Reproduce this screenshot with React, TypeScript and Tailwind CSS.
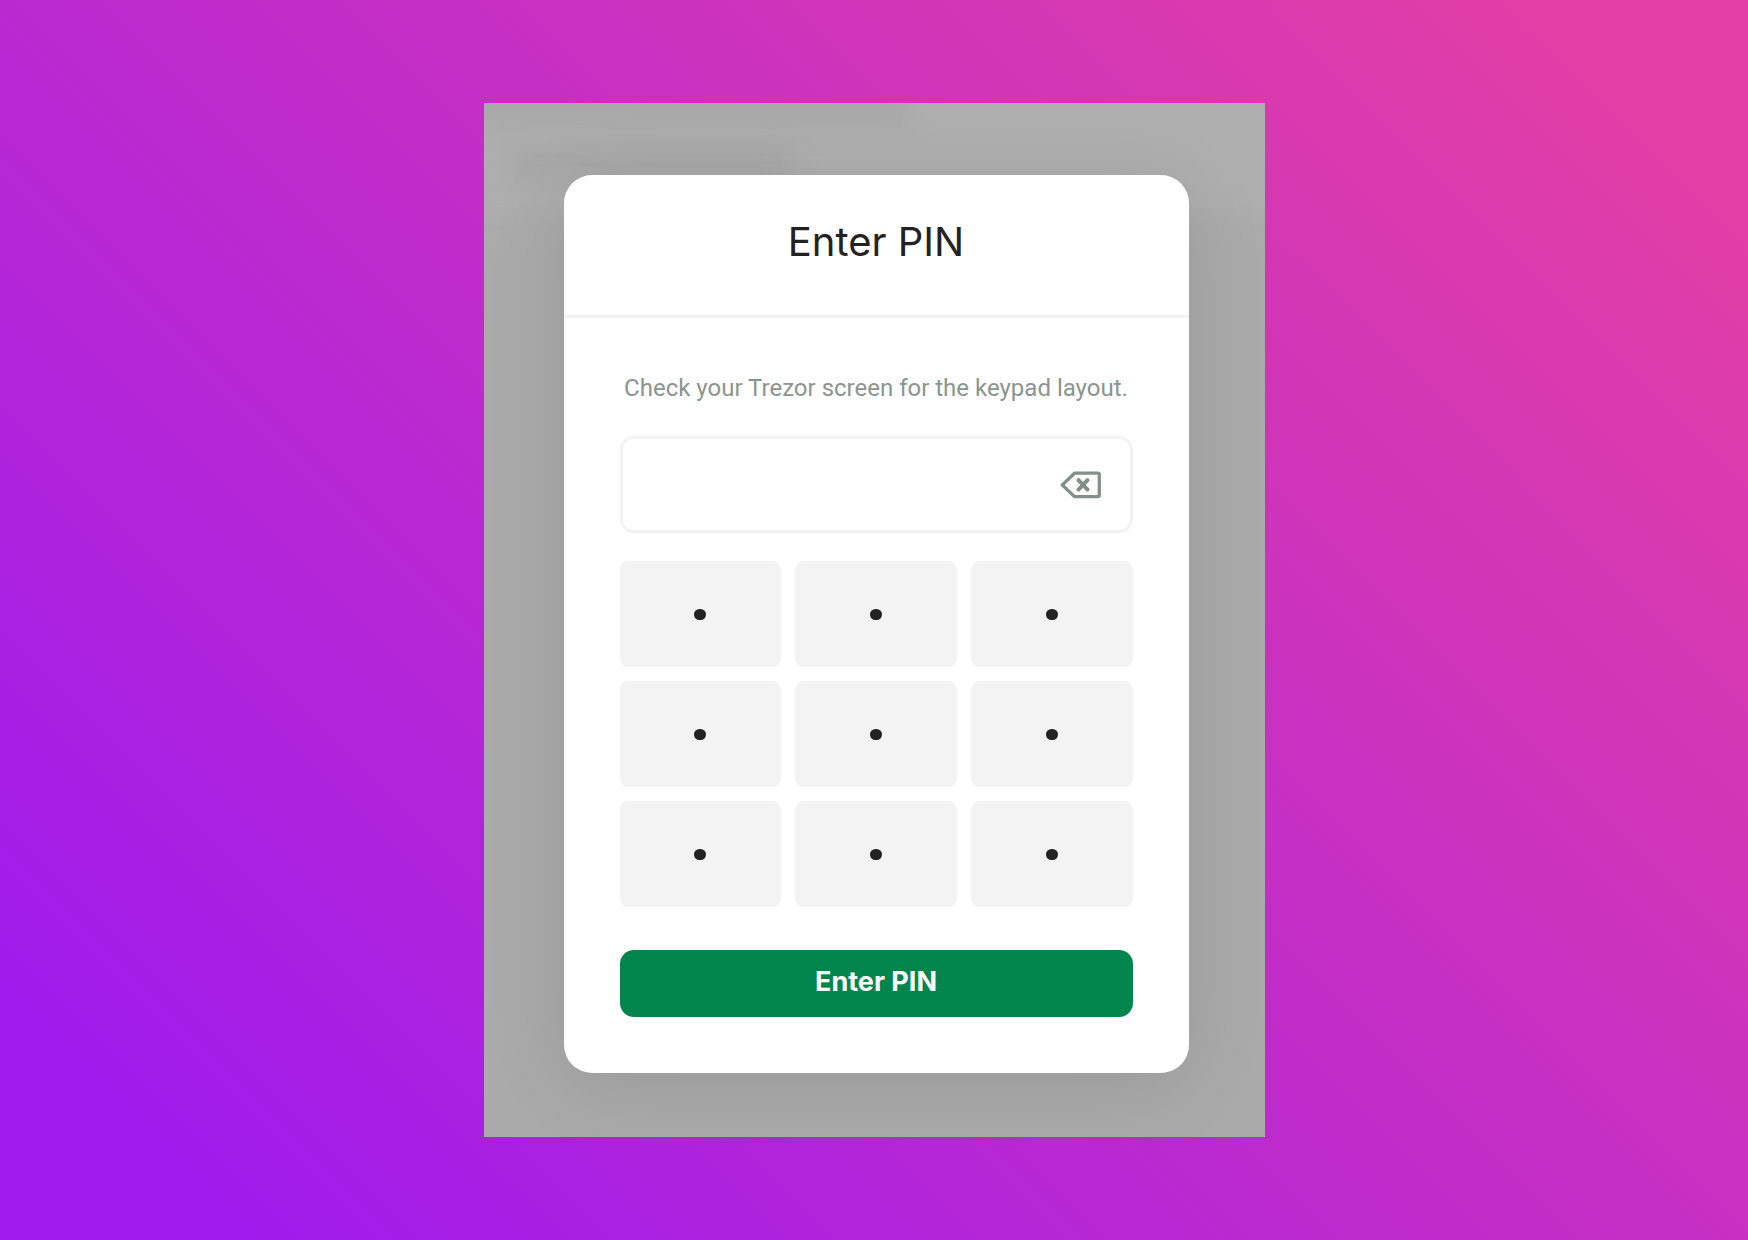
import { useState } from "react"

const keys = [7, 8, 9, 4, 5, 6, 1, 2, 3]

function BackspaceIcon() {
  return (
    <svg width="42" height="30" viewBox="0 0 42 30" fill="none" stroke="#829089" strokeLinejoin="round" aria-hidden="true">
      <path d="M14.5 3.2H37.9a1.4 1.4 0 0 1 1.4 1.4v20.6a1.4 1.4 0 0 1-1.4 1.4H14.5L2.3 15Z" strokeWidth="3.3" />
      <path d="M18.5 10.2l9 9.4M27.5 10.2l-9 9.4" strokeWidth="4" strokeLinecap="round" />
    </svg>
  )
}

type KeypadProps = {
  onPress: (value: number) => void
}

function Keypad({ onPress }: KeypadProps) {
  return (
    <div className="mt-7 grid grid-cols-3 gap-3.5">
      {keys.map((key, i) => (
        <button
          key={key}
          type="button"
          aria-label={`Key ${i + 1}`}
          onClick={() => onPress(key)}
          className="flex h-[106px] items-center justify-center rounded-lg bg-[#f3f3f3] hover:bg-gray-200"
        >
          <span className="h-[11px] w-3 rounded-full bg-[#222222]" />
        </button>
      ))}
    </div>
  )
}

export default function App() {
  const [pin, setPin] = useState("")

  return (
    <main className="flex min-h-screen items-center justify-center bg-[linear-gradient(45deg,#a01bec_8%,#e13ea6_92%)] font-['Inter',sans-serif]">
      <div className="relative w-full max-w-[781px] overflow-hidden bg-[#afafaf] pt-[72px] pr-[76px] pb-16 pl-20">
        {/* blurred page content behind the dialog */}
        <div className="absolute -inset-x-8 top-28 -bottom-8 bg-[#aaaaaa] blur-md" />
        <div className="absolute -top-8 -left-4 h-13 w-[441px] bg-[#a7a7a7] blur-md" />
        <div className="absolute top-11 left-6 h-9 w-[280px] bg-[#a7a7a7] blur-md" />

        <section
          role="dialog"
          aria-labelledby="pin-title"
          className="relative rounded-[28px] bg-white shadow-[0_12px_80px_rgba(0,0,0,0.1)]"
        >
          <header className="flex h-[143px] items-center justify-center border-b-[3px] border-[#f3f3f3] pb-1.5">
            <h1 id="pin-title" className="text-[40px] leading-[48px] text-[#222222]">
              Enter PIN
            </h1>
          </header>

          <form className="px-14 pt-[54px] pb-14" onSubmit={(e) => e.preventDefault()}>
            <label htmlFor="pin" className="block text-center font-['Roboto',sans-serif] text-2xl leading-8 whitespace-nowrap text-[#8b9590]">
              Check your Trezor screen for the keypad layout.
            </label>

            <div className="mt-8 flex h-[97px] items-center rounded-[14px] border-[3px] border-[#f3f3f3] pr-7 pl-7">
              <input
                id="pin"
                type="password"
                readOnly
                value={pin}
                className="min-w-0 flex-1 bg-transparent text-3xl text-[#222222] outline-none"
              />
              <button type="button" aria-label="Delete last digit" onClick={() => setPin(pin.slice(0, -1))}>
                <BackspaceIcon />
              </button>
            </div>

            <Keypad onPress={(value) => setPin(pin + value)} />

            <button
              type="submit"
              className="mt-[43px] flex h-[67px] w-full items-center justify-center rounded-[14px] bg-[#02854d] pb-1 text-[27px] leading-8 font-bold text-white hover:bg-green-800"
            >
              Enter PIN
            </button>
          </form>
        </section>
      </div>
    </main>
  )
}
